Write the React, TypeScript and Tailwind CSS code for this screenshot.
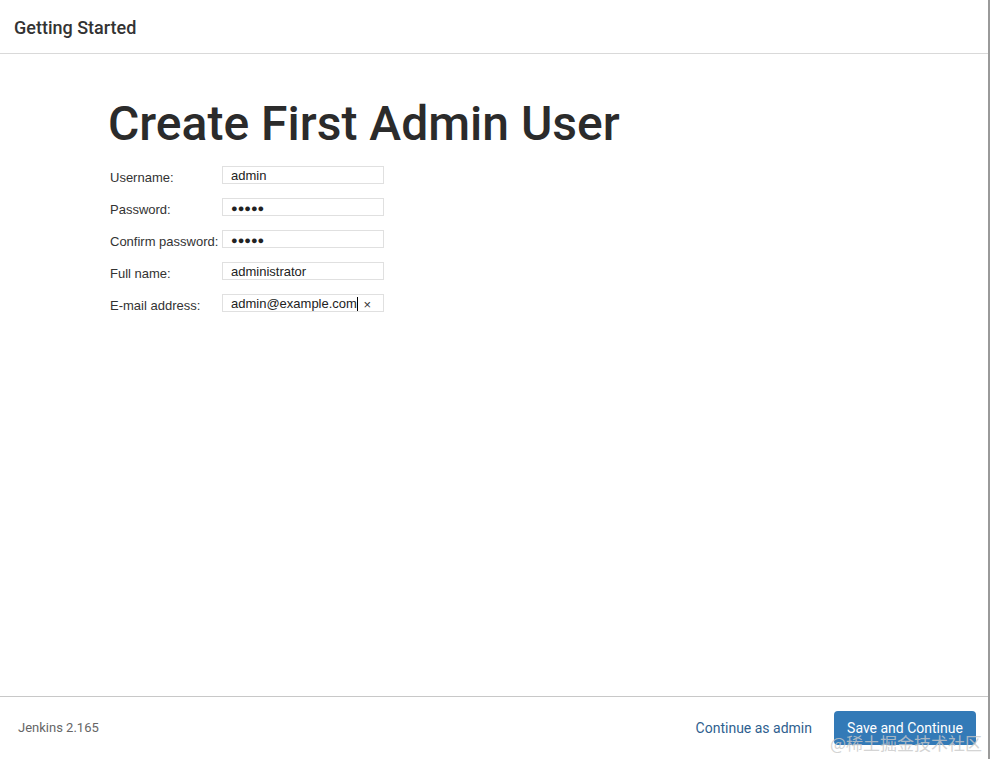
import React from "react";

const fields = [
  { label: "Username:", value: "admin", type: "text" },
  { label: "Password:", value: "admin", type: "password" },
  { label: "Confirm password:", value: "admin", type: "password" },
  { label: "Full name:", value: "administrator", type: "text" },
  { label: "E-mail address:", value: "admin@example.com", type: "email" },
];

export default function App() {
  return (
    <div className="relative flex h-[759px] w-[990px] flex-col overflow-hidden border-r-2 border-[#9a9a9a] bg-white font-['Roboto',sans-serif] text-[#333]">
      {/* Header */}
      <div className="flex h-[54px] shrink-0 items-center border-b border-[#d9d9d9] px-[14px] pt-[2px]">
        <h4 className="text-[18px] font-medium text-[#333]">Getting Started</h4>
      </div>

      {/* Body */}
      <div className="flex-1 pl-[108px] pt-[38px]">
        <h1 className="text-[48px] font-medium leading-[64px] tracking-[0px] text-[#2b2b2b]">
          Create First Admin User
        </h1>
        <div className="mt-[10px] flex flex-col gap-[14px] pl-[2px] font-['Liberation_Sans',Arial,sans-serif] text-[13px] text-[#333]">
          {fields.map((f, i) => (
            <div key={f.label} className="flex h-[18px] items-center">
              <label className="mt-[6px] w-[112px] shrink-0 whitespace-nowrap">{f.label}</label>
              <div className="relative flex h-[18px] w-[162px] items-center border border-[#e0e0e0] pl-[8px] pt-[2px]">
                {f.type === "password" ? (
                  <span className="text-[11px] text-[#222]">●●●●●</span>
                ) : (
                  <span className="text-[#222]">{f.value}</span>
                )}
                {i === 4 && (
                  <>
                    <span className="h-[14px] w-px bg-black" />
                    <span className="absolute right-[12px] top-[0px] text-[13px] text-[#333]">×</span>
                  </>
                )}
              </div>
            </div>
          ))}
        </div>
      </div>

      {/* Footer */}
      <div className="flex h-[63px] shrink-0 items-center justify-between border-t border-[#c8c8c8] pl-[18px] pr-[12px]">
        <span className="text-[13px] text-[#666]">Jenkins 2.165</span>
        <div className="flex items-center gap-[22px]">
          <span className="text-[14px] text-[#2f5f8f]">Continue as admin</span>
          <button className="h-[34px] w-[142px] rounded-[4px] bg-[#337ab7] text-[14px] text-white">
            Save and Continue
          </button>
        </div>
      </div>

      {/* watermark */}
      <span className="pointer-events-none absolute bottom-[4px] right-[6px] font-['Noto_Sans_CJK_SC',sans-serif] text-[17px] text-[#c8c8c8]/80">
        @稀土掘金技术社区
      </span>
    </div>
  );
}
